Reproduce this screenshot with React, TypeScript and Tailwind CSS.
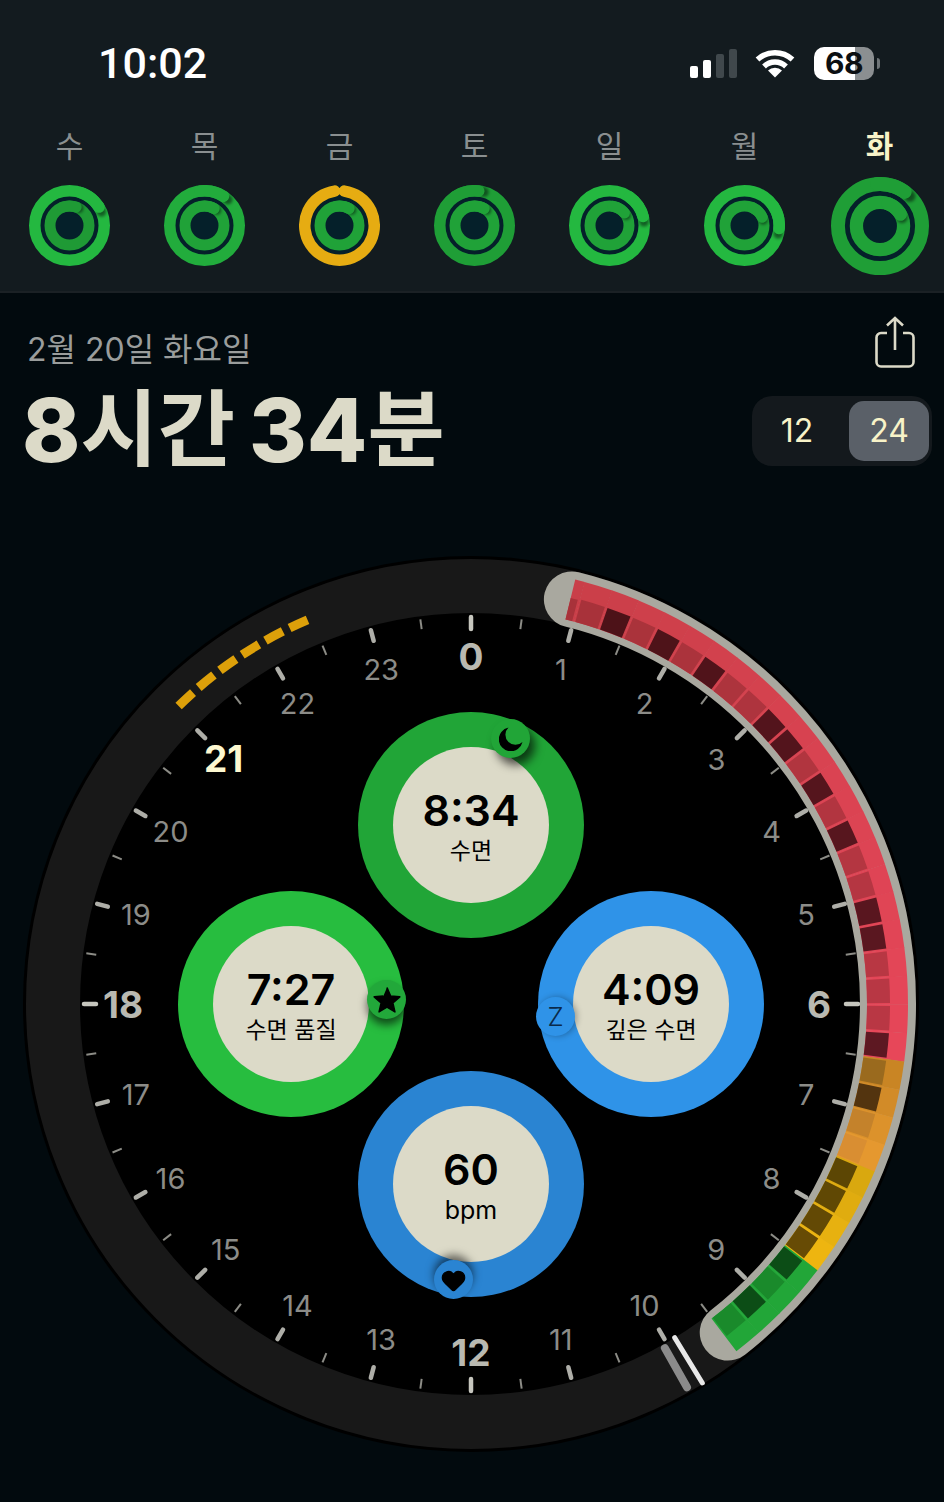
import { Heart } from "lucide-react";
import type { ReactNode } from "react";

/* ─── Polar helpers ─── */

const C = 448;

function pt(r: number, deg: number): [number, number] {
  const a = (deg * Math.PI) / 180;
  return [C + r * Math.sin(a), C - r * Math.cos(a)];
}

function arc(r: number, a0: number, a1: number, cx = C) {
  const rad = (d: number) => (d * Math.PI) / 180;
  const x0 = cx + r * Math.sin(rad(a0));
  const y0 = cx - r * Math.cos(rad(a0));
  const x1 = cx + r * Math.sin(rad(a1));
  const y1 = cx - r * Math.cos(rad(a1));
  return `M${x0} ${y0} A${r} ${r} 0 ${a1 - a0 > 180 ? 1 : 0} 1 ${x1} ${y1}`;
}

function mix(a: string, b: string, t: number) {
  const ch = (h: string, i: number) => parseInt(h.slice(1 + i * 2, 3 + i * 2), 16);
  const out = [0, 1, 2].map((i) => Math.round(ch(a, i) + (ch(b, i) - ch(a, i)) * t));
  return `rgb(${out.join(",")})`;
}

/* ─── Week rings ─── */

interface RingProps {
  size: number;
  outer: string;
  inner: string;
  outerEnd: number;
  innerEnd: number;
  gap?: boolean;
}

function Ring({ size, outer, inner, outerEnd, innerEnd, gap }: RingProps) {
  const c = 40.5;
  const head = (r: number, w: number, end: number, color: string) => {
    const rad = ((end + 9) * Math.PI) / 180;
    return (
      <>
        <circle
          cx={c + r * Math.sin(rad)}
          cy={c - r * Math.cos(rad)}
          r={w / 2 - 1}
          fill="#04140c"
          opacity={0.55}
          className="blur-[1.5px]"
        />
        <path d={arc(r, end - 40, end, c)} fill="none" stroke={color} strokeWidth={w} strokeLinecap="round" />
      </>
    );
  };
  return (
    <svg width={size} height={size} viewBox="0 0 81 81">
      <circle cx={c} cy={c} r={40.5} fill="#05202a" />
      {gap ? (
        <path d={arc(34.75, 8, 352, c)} fill="none" stroke={outer} strokeWidth={11.5} strokeLinecap="round" />
      ) : (
        <>
          <circle cx={c} cy={c} r={34.75} fill="none" stroke={outer} strokeWidth={11.5} />
          {head(34.75, 11.5, outerEnd, outer)}
        </>
      )}
      <circle cx={c} cy={c} r={19.5} fill="none" stroke={inner} strokeWidth={11} />
      {head(19.5, 11, innerEnd, inner)}
    </svg>
  );
}

const bright = "#24b840";
const mid = "#20a238";
const days = [
  { label: "수", outer: bright, inner: "#1f9a35", outerEnd: 58, innerEnd: 20 },
  { label: "목", outer: "#22ac3c", inner: mid, outerEnd: 33, innerEnd: 30 },
  { label: "금", outer: "#e6ac12", inner: mid, outerEnd: 0, innerEnd: 30, gap: true },
  { label: "토", outer: "#1f9e36", inner: mid, outerEnd: 7, innerEnd: 30 },
  { label: "일", outer: bright, inner: mid, outerEnd: 75, innerEnd: 50 },
  { label: "월", outer: bright, inner: mid, outerEnd: 95, innerEnd: 65 },
  { label: "화", outer: "#1f9e36", inner: mid, outerEnd: 36, innerEnd: 60, today: true },
];

/* ─── Status bar ─── */

function StatusIcons() {
  return (
    <div className="flex items-center">
      <div className="flex h-[29px] items-end gap-[5px]">
        <div className="h-[12px] w-[8px] rounded-[2px] bg-white" />
        <div className="h-[18px] w-[8px] rounded-[2px] bg-white" />
        <div className="h-[24px] w-[8px] rounded-[2px] bg-[#40484c]" />
        <div className="h-[29px] w-[8px] rounded-[2px] bg-[#40484c]" />
      </div>
      <svg width="40" height="30" viewBox="0 0 40 30" className="ml-[18px]">
        <path d="M2.500 11.500A26 26 0 0 1 37.500 11.500" fill="none" stroke="#fff" strokeWidth="5.500" />
        <path d="M9 18.500A16 16 0 0 1 31 18.500" fill="none" stroke="#fff" strokeWidth="5.500" />
        <path d="M20 29.500L13 22.500A10 10 0 0 1 27 22.500Z" fill="#fff" />
      </svg>
      <div className="relative ml-[19px] flex h-[33px] w-[60px] items-center justify-center rounded-[10px] bg-[linear-gradient(to_right,#fff_41px,#8b8f91_41px)]">
        <span className="text-[30px] leading-[33px] font-bold tracking-[-0.5px] text-[#0b0f12]">68</span>
      </div>
      <div className="ml-[3px] h-[11px] w-[3px] rounded-r-full bg-[#6f7578]" />
    </div>
  );
}

/* ─── Gauges ─── */

interface GaugeProps {
  value: string;
  label: string;
  ring: string;
  cell: string;
  badge: ReactNode;
  latin?: boolean;
}

function Gauge({ value, label, ring, cell, badge, latin }: GaugeProps) {
  return (
    <div className={`${cell} relative -m-[23px] flex size-[226px] items-center justify-center rounded-full ${ring}`}>
      <div className="flex size-[156px] flex-col items-center justify-center rounded-full bg-[#dcdac8] text-black">
        <span className="text-[43px] leading-[50px] font-semibold">{value}</span>
        <span className={latin ? "translate-y-px text-[25px] leading-[30px]" : "translate-y-px text-[23px] leading-[30px]"}>
          {label}
        </span>
      </div>
      {badge}
    </div>
  );
}

const badgeBase = "absolute flex size-[39px] items-center justify-center rounded-full";

const starPath = Array.from({ length: 10 }, (_, i) => {
  const r = i % 2 === 0 ? 13.500 : 6.200;
  const a = (i * 36 * Math.PI) / 180;
  return `${i === 0 ? "M" : "L"}${(14 + r * Math.sin(a)).toFixed(2)} ${(15 - r * Math.cos(a)).toFixed(2)}`;
}).join(" ");

/* ─── Dial ─── */

type Kind = "m" | "d";

// 15 minute cells, each 3.75deg, centre of the first one at 16.95deg
const cells: Kind[] = "mdmdmdmmddmdmdmmddmmmd".split("") as Kind[];
const orange: Kind[] = ["m", "d", "m", "m"];
const yellow: Kind[] = ["d", "d", "d", "d"];
const green: Kind[] = ["d", "m", "d", "m"];

function Sleepband() {
  const items: { a: number; outer: string; cell: string }[] = [];
  cells.forEach((k, i) => {
    const t = i / cells.length;
    items.push({
      a: 16.95 + i * 3.75,
      outer: mix("#cb3f49", "#e8475a", t),
      cell: k === "d" ? mix("#4c1218", "#5e1822", t) : mix("#a8323a", "#bb3845", t),
    });
  });
  const red = items.length;
  orange.forEach((k, i) => {
    items.push({
      a: 16.95 + (red + i) * 3.75,
      outer: mix("#c98524", "#e5982f", i / 3),
      cell: k === "d" ? "#53340f" : mix("#9a6a1e", "#c4822b", i / 2),
    });
  });
  yellow.forEach((_, i) => {
    items.push({
      a: 16.95 + (red + 4 + i) * 3.75,
      outer: mix("#d9a80f", "#eeb510", i / 3),
      cell: mix("#5c4604", "#674b05", i / 3),
    });
  });
  green.forEach((k, i) => {
    items.push({
      a: 16.95 + (red + 8 + i) * 3.75,
      outer: "#22a638",
      cell: k === "d" ? "#0c4d16" : "#1a8a2b",
    });
  });

  return (
    <g fill="none">
      <path d={arc(417, 14, 142)} stroke="#a9a89f" strokeWidth={56} strokeLinecap="round" />
      {/* leading partial cell */}
      <path d={arc(416.5, 13.8, 15.1)} stroke="#c93f49" strokeWidth={41} />
      <path d={arc(407, 13.8, 14.8)} stroke="#a8323a" strokeWidth={22} />
      {items.map((s) => (
        <path key={`${s.a}-band`} d={arc(416.5, s.a - 1.9, s.a + 1.9)} stroke={s.outer} strokeWidth={41} />
      ))}
      {items.map((s) => (
        <path key={`${s.a}-cell`} d={arc(407.5, s.a - 1.68, s.a + 1.68)} stroke={s.cell} strokeWidth={23} />
      ))}
    </g>
  );
}

function Dial() {
  const hours = Array.from({ length: 24 }, (_, i) => i);
  const halves = hours.map((h) => h * 15 + 7.5);
  return (
    <div className="relative ml-[23px] mt-[86px] size-[896px]">
      <svg width="896" height="896" viewBox="0 0 896 896" className="block">
        <circle cx={C} cy={C} r={448} fill="#000" />
        <circle cx={C} cy={C} r={418} fill="none" stroke="#181818" strokeWidth={54} />

        {/* ticks */}
        {halves.map((a) => {
          const [x0, y0] = pt(388, a);
          const [x1, y1] = pt(378, a);
          return <line key={a} x1={x0} y1={y0} x2={x1} y2={y1} stroke="#8c8c86" strokeWidth={2} />;
        })}
        {hours.map((h) => {
          const a = h * 15;
          const [x0, y0] = pt(387, a);
          const [x1, y1] = pt(h % 6 === 0 ? 375 : 376, a);
          return (
            <line
              key={h}
              x1={x0}
              y1={y0}
              x2={x1}
              y2={y1}
              stroke={h % 6 === 0 ? "#c6c6be" : "#aeaea8"}
              strokeWidth={4.5}
              strokeLinecap="round"
            />
          );
        })}

        {/* hour labels */}
        {hours.map((h) => {
          const major = h % 6 === 0;
          const [x, y] = pt(major ? 348 : 347, h * 15);
          const now = h === 21;
          return (
            <text
              key={h}
              x={now ? x - 2 : x}
              y={major || now ? y : y + 0.5}
              textAnchor="middle"
              dominantBaseline="central"
              className={
                now
                  ? "fill-[#fdf8d0] text-[37px] font-bold"
                  : major
                    ? "fill-[#b9b9b1] text-[37px] font-bold"
                    : "fill-[#8c8c88] text-[29px] font-normal"
              }
            >
              {h}
            </text>
          );
        })}

        {/* bedtime goal dashes */}
        {[0, 1, 2, 3, 4, 5].map((i) => {
          const a = 316.9 + i * 3.74;
          return <path key={i} d={arc(417.5, a - 1.35, a + 1.35)} fill="none" stroke="#dda00a" strokeWidth={9} />;
        })}

        <Sleepband />

        {/* wake markers */}
        <path d={`M${pt(395, 150.6).join(" ")} L${pt(440, 150.6).join(" ")}`} stroke="#8b8b8b" strokeWidth={8} strokeLinecap="round" />
        <path d={`M${pt(391, 148.6).join(" ")} L${pt(444, 148.6).join(" ")}`} stroke="#e8e8e8" strokeWidth={5} strokeLinecap="round" />
      </svg>

      <div className="absolute inset-0 grid grid-cols-[repeat(3,180px)] grid-rows-[repeat(3,180px)] place-content-center">
        <Gauge
          value="8:34"
          label="수면"
          ring="bg-[#21a537]"
          cell="col-start-2 row-start-1 translate-y-px"
          badge={
            <div className={`${badgeBase} left-[133px] top-[7px] bg-[#21a537] shadow-[5px_7px_10px_rgba(0,0,0,0.65)]`}>
              <svg width="24" height="24" viewBox="0 0 24 24">
                <path d="M9.500 0.500A12 12 0 1 0 23.500 15A10 10 0 0 1 9.500 0.500Z" fill="#000" />
              </svg>
            </div>
          }
        />
        <Gauge
          value="7:27"
          label="수면 품질"
          ring="bg-[#27bd3f]"
          cell="col-start-1 row-start-2"
          badge={
            <div className={`${badgeBase} left-[189px] top-[89px] bg-[#22a83a] shadow-[0_6px_9px_rgba(0,0,0,0.6)]`}>
              <svg width="28" height="28" viewBox="0 0 28 28">
                <path d={starPath} fill="#000" stroke="#000" strokeWidth="1.500" strokeLinejoin="round" />
              </svg>
            </div>
          }
        />
        <Gauge
          value="4:09"
          label="깊은 수면"
          ring="bg-[#2f93e8]"
          cell="col-start-3 row-start-2"
          badge={
            <div className={`${badgeBase} left-[-2px] top-[106px] bg-[#2f93e8] shadow-[2px_0_6px_rgba(0,0,0,0.3)]`}>
              <span className="text-[26px] leading-none font-light text-[#0a2a4a]">Z</span>
            </div>
          }
        />
        <Gauge
          value="60"
          label="bpm"
          latin
          ring="bg-[#2a84d2]"
          cell="col-start-2 row-start-3"
          badge={
            <div className={`${badgeBase} left-[76px] top-[189px] bg-[#2a84d2] shadow-[0_-5px_9px_rgba(0,0,0,0.55)]`}>
              <Heart size={27} fill="#000" stroke="#000" strokeWidth={1} className="translate-y-px" />
            </div>
          }
        />
      </div>
    </div>
  );
}

/* ─── Page ─── */

export default function App() {
  return (
    <div className="h-[1502px] w-[944px] overflow-hidden bg-[#020a0e] [font-family:Inter,'Noto_Sans_CJK_KR',sans-serif]">
      <header className="h-[293px] border-b-2 border-[#1b2125] bg-[#131b1f]">
        <div className="flex h-[126px] items-center justify-between pl-[98px] pr-[64px]">
          <span className="text-[43px] leading-none font-medium text-white [font-family:Roboto,sans-serif]">10:02</span>
          <StatusIcons />
        </div>
        <div className="ml-[2px] grid grid-cols-[repeat(7,135px)]">
          {days.map((d) => (
            <div key={d.label} className="flex flex-col items-center">
              <span
                className={
                  d.today
                    ? "h-[40px] text-[30px] leading-[40px] font-bold text-[#f8f3c8]"
                    : "h-[40px] text-[30px] leading-[40px] text-[#8a8f90]"
                }
              >
                {d.label}
              </span>
              <div className="mt-[10px] flex h-[99px] items-center justify-center">
                <Ring
                  size={d.today ? 98 : 81}
                  outer={d.outer}
                  inner={d.inner}
                  outerEnd={d.outerEnd}
                  innerEnd={d.innerEnd}
                  gap={d.gap}
                />
              </div>
            </div>
          ))}
        </div>
      </header>

      <section className="flex justify-between">
        <div className="pl-[27px] pt-[37px]">
          <div className="h-[40px] text-[32px] leading-[40px] text-[#9a9d9c]">2월 20일 화요일</div>
          <h1 className="mt-[20px] flex h-[80px] items-center whitespace-nowrap font-bold leading-[80px] text-[#dcdac8]">
            <span className="-ml-[5px] text-[88px] font-extrabold">8</span>
            <span className="text-[84px]">시간</span>
            <span className="ml-[14px] text-[88px] font-extrabold">34</span>
            <span className="text-[84px]">분</span>
          </h1>
        </div>
        <div className="flex flex-col items-end pr-[12px] pt-[23px]">
          <svg width="42" height="53" viewBox="0 0 42 53" fill="none" stroke="#dcdac8" strokeWidth="2.600" className="mr-[16px]">
            <path d="M13 17H7a4.500 4.500 0 0 0-4.500 4.500V46a4.500 4.500 0 0 0 4.500 4.500H35a4.500 4.500 0 0 0 4.500-4.500V21.500A4.500 4.500 0 0 0 35 17H29" />
            <path d="M21 34V2M13 9.500L21 2l8 7.500" />
          </svg>
          <div className="mt-[27px] flex h-[70px] w-[180px] items-center justify-between rounded-[20px] bg-[#14191d] pl-[3px] pr-[3px] text-[32px] text-[#f8f3c8]">
            <span className="flex h-[60px] w-[84px] items-center justify-center">12</span>
            <span className="flex h-[60px] w-[80px] items-center justify-center rounded-[15px] bg-[#5a6068]">24</span>
          </div>
        </div>
      </section>

      <Dial />
    </div>
  );
}
